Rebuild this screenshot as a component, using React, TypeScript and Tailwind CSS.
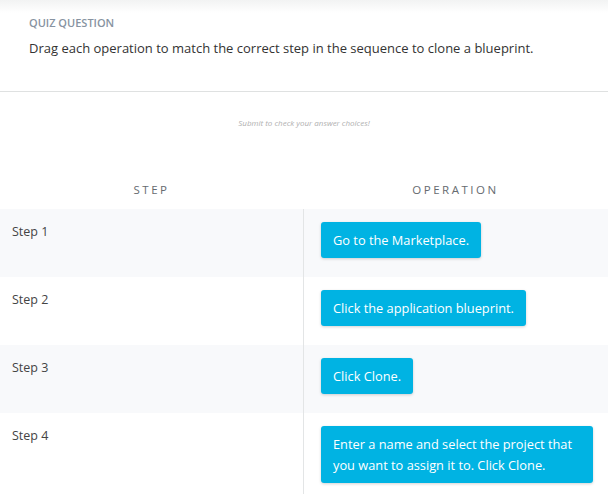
const rows = [
  { step: "Step 1", op: "Go to the Marketplace.", shade: true },
  { step: "Step 2", op: "Click the application blueprint.", shade: false },
  { step: "Step 3", op: "Click Clone.", shade: true },
  {
    step: "Step 4",
    op: "Enter a name and select the project that you want to assign it to. Click Clone.",
    shade: false,
  },
];

export default function App() {
  return (
    <div className="h-[494px] w-[608px] overflow-hidden bg-white font-['Open_Sans',sans-serif] text-[#333]">
      {/* Question header */}
      <div className="h-[92px] border-b border-[#dfe1e1] bg-gradient-to-b from-[#f2f3f3] via-white via-[14%] to-white px-[29px] pt-[15px]">
        <div className="text-[11px] font-semibold uppercase leading-[16px] text-[#8793a1]">
          Quiz Question
        </div>
        <p className="mt-[7px] text-[13px] leading-[20px] text-[#333]">
          Drag each operation to match the correct step in the sequence to clone a blueprint.
        </p>
      </div>

      <div className="pt-[25px] text-center text-[8px] italic leading-[12px] text-[#b0b0b0]">
        Submit to check your answer choices!
      </div>

      {/* Table */}
      <div className="mt-[42px] grid grid-cols-[303px_1fr]">
        <div className="flex h-[38px] items-center justify-center text-[11.5px] tracking-[2.5px] text-[#666b70]">
          STEP
        </div>
        <div className="flex h-[38px] items-center justify-center text-[11.5px] tracking-[2.5px] text-[#666b70]">
          OPERATION
        </div>
        {rows.map((r, i) => (
          <div key={r.step} className={`col-span-2 grid grid-cols-[303px_1fr] ${r.shade ? "bg-[#f8f9fb]" : "bg-white"}`}>
            <div
              className={`${i === rows.length - 1 ? "h-[100px]" : "h-[68px]"} pl-[12px] pt-[14px] text-[12.5px] leading-[17px] text-[#444]`}
            >
              {r.step}
            </div>
            <div className="border-l border-[#e3e5e6] pl-[17px] pt-[13px]">
              <div className="inline-block max-w-[272px] rounded-[3px] bg-[#00b3e3] px-[12px] py-[7.5px] text-[12.8px] leading-[21px] text-white shadow-[0_1px_3px_rgba(0,0,0,0.18)]">
                {r.op}
              </div>
            </div>
          </div>
        ))}
      </div>
    </div>
  );
}
